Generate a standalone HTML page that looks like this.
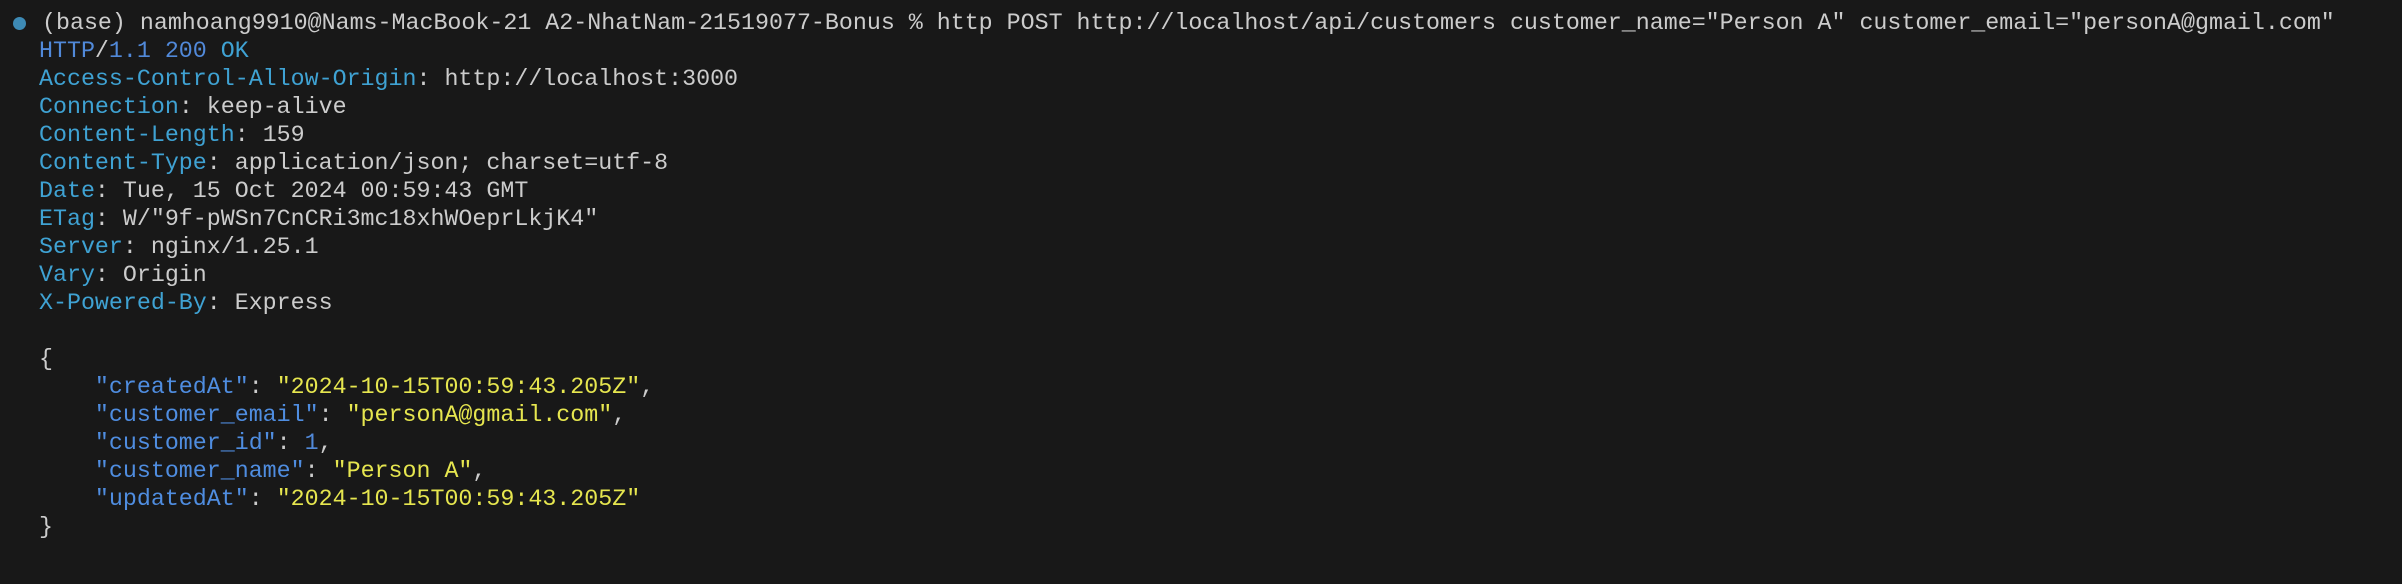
<!DOCTYPE html>
<html><head><meta charset="utf-8"><style>
html,body{margin:0;padding:0;background:#181818;width:2402px;height:584px;overflow:hidden;position:relative}
pre{margin:0;position:absolute;left:39px;top:9px;font-family:"Liberation Mono",monospace;font-size:23.3px;line-height:28px;color:#cccccc;white-space:pre}
.c{color:#3fa2d3}.b{color:#5189d9}.k{color:#4f8de0}.y{color:#e6e64f}
.dot{position:absolute;left:13px;top:17px;width:13px;height:13px;border-radius:50%;background:#3d8ab5}
</style></head><body>
<div class="dot"></div>
<pre><span style="margin-left:3px">(base) namhoang9910@Nams-MacBook-21 A2-NhatNam-21519077-Bonus % http POST http://localhost/api/customers customer_name="Person A" customer_email="personA@gmail.com"</span>
<span class="b">HTTP</span>/<span class="b">1.1 200</span> <span class="c">OK</span>
<span class="c">Access-Control-Allow-Origin</span>: http://localhost:3000
<span class="c">Connection</span>: keep-alive
<span class="c">Content-Length</span>: 159
<span class="c">Content-Type</span>: application/json; charset=utf-8
<span class="c">Date</span>: Tue, 15 Oct 2024 00:59:43 GMT
<span class="c">ETag</span>: W/"9f-pWSn7CnCRi3mc18xhWOeprLkjK4"
<span class="c">Server</span>: nginx/1.25.1
<span class="c">Vary</span>: Origin
<span class="c">X-Powered-By</span>: Express

{
    <span class="k">"createdAt"</span>: <span class="y">"2024-10-15T00:59:43.205Z"</span>,
    <span class="k">"customer_email"</span>: <span class="y">"personA@gmail.com"</span>,
    <span class="k">"customer_id"</span>: <span class="b">1</span>,
    <span class="k">"customer_name"</span>: <span class="y">"Person A"</span>,
    <span class="k">"updatedAt"</span>: <span class="y">"2024-10-15T00:59:43.205Z"</span>
}</pre>
</body></html>
